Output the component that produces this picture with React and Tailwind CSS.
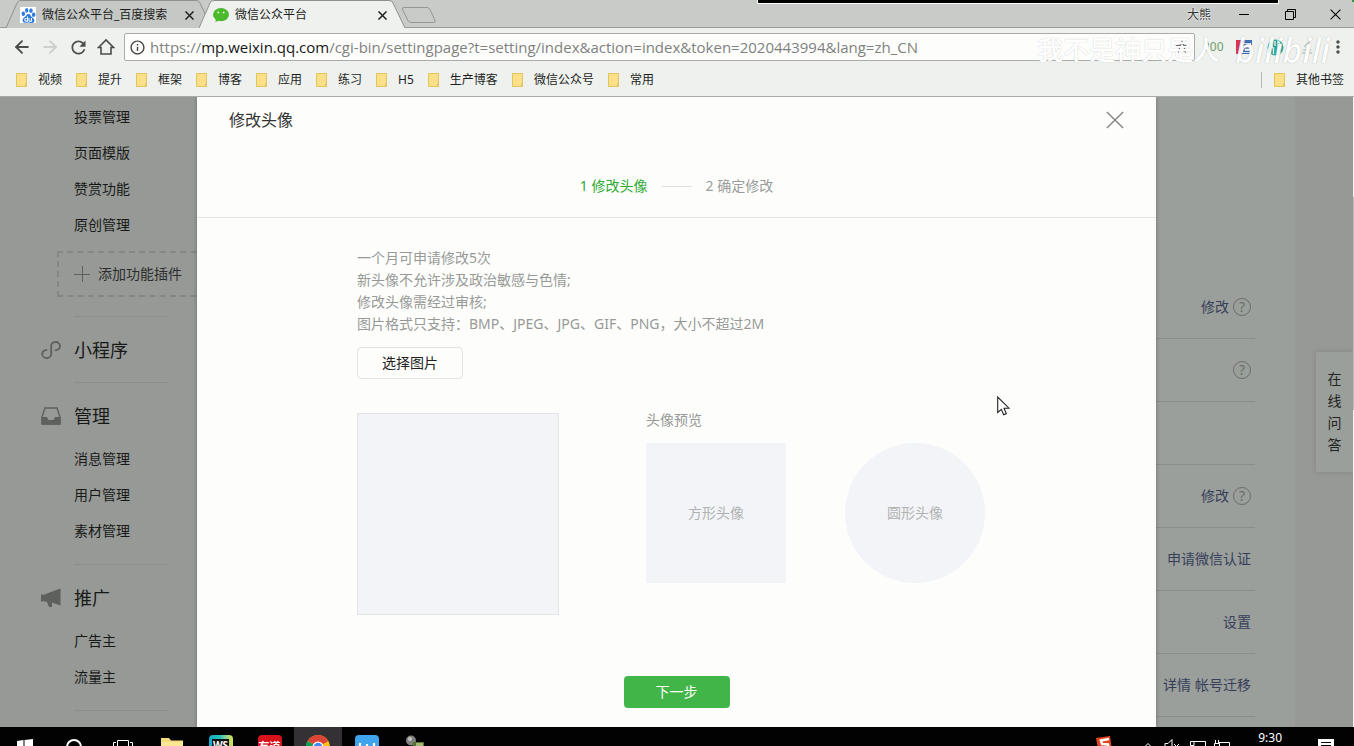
import React from "react";
import { MdRefresh, MdInfoOutline, MdStarBorder, MdMoreVert } from "react-icons/md";
import { SiBaidu } from "react-icons/si";
import { ArrowLeft, ArrowRight } from "lucide-react";

const bookmarks = ["视频", "提升", "框架", "博客", "应用", "练习", "H5", "生产博客", "微信公众号", "常用"];

function Folder() {
  return (
    <svg width="11" height="14" viewBox="0 0 11 14" aria-hidden="true">
      <path d="M.5.5h10v9.5l-1 .5v3h-9z" fill="#fbe08a" stroke="#e3c35c" />
      <path d="M9.5 13.5l1-3v3z" fill="#fff0b0" stroke="#e3c35c" />
    </svg>
  );
}

function CloseGlyph({ size, stroke, width }) {
  return (
    <svg width={size} height={size} viewBox="0 0 10 10" stroke={stroke} strokeWidth={width} aria-hidden="true">
      <path d="M.5.5l9 9M9.5.5l-9 9" />
    </svg>
  );
}

function Tab({ label, icon, active }) {
  return (
    <div className="relative flex h-7 w-[206px] shrink-0 items-center pt-0.5 pr-[18px] pl-3.5">
      <svg className="absolute inset-0 h-full w-full" viewBox="0 0 206 28" preserveAspectRatio="none" aria-hidden="true">
        <path d="M0 28L11 3Q12 .5 15 .5H190Q193 .5 194 3L206 28" fill={active ? "#eef1ee" : "#c5c8c5"} stroke="#8f918f" />
      </svg>
      <button type="button" className="relative flex min-w-0 flex-1 items-center gap-1.5 text-left text-xs text-[#1c1d1c]">
        {icon}
        <span className="truncate">{label}</span>
      </button>
      <button type="button" aria-label="关闭标签页" className="relative">
        <CloseGlyph size={9} stroke="#222" width={1.7} />
      </button>
    </div>
  );
}

function WeChatIcon() {
  return (
    <svg width="16" height="16" viewBox="0 0 16 16" aria-hidden="true">
      <ellipse cx="8" cy="7.6" rx="8" ry="6.6" fill="#4bb92c" />
      <path d="M3 12l-.6 3L6 13.500z" fill="#4bb92c" />
      <circle cx="5.300" cy="5.400" r="1" fill="#dff5d5" />
      <circle cx="10.600" cy="5.400" r="1" fill="#dff5d5" />
    </svg>
  );
}

function BrowserHeader() {
  return (
    <header className="relative shrink-0 border-b border-[#a9aba9] bg-[#eef1ee]">
      <div className="absolute top-0 right-[76px] z-10 h-[3px] w-[520px] bg-black outline-1 outline-white" />
      <div className="flex h-7 items-end bg-[#c9cbc9] shadow-[inset_0_-1px_0_#9a9c9a]">
        <div className="flex min-w-0 flex-1 pl-1.5">
          <Tab
            label="微信公众平台_百度搜索"
            icon={
              <span className="flex size-4 items-center justify-center bg-white text-[#2f7ddb]">
                <SiBaidu size={15} />
              </span>
            }
          />
          <div className="-ml-[13px]">
            <Tab active label="微信公众平台" icon={<WeChatIcon />} />
          </div>
          <button type="button" aria-label="新标签页" className="-ml-1 self-center pt-0.5">
            <svg width="36" height="18" viewBox="0 0 36 18" aria-hidden="true">
              <path d="M3 1.500H26Q28 1.500 29 3.500L34 14.500Q34.500 16.500 32.500 16.500H10Q8 16.500 7 14.500L1.500 3.500Q1 1.500 3 1.500Z" fill="#c9cbc9" stroke="#959795" />
            </svg>
          </button>
        </div>
        <div className="flex h-7 items-center">
          <button type="button" className="mr-2.5 pt-0.5 text-xs text-[#2e2f2e] [text-shadow:0_0_2px_#fff,0_0_2px_#fff]">大熊</button>
          <button type="button" aria-label="最小化" className="flex w-[46px] justify-center">
            <span className="h-px w-2.5 bg-black" />
          </button>
          <button type="button" aria-label="还原" className="flex w-[46px] justify-center">
            <svg width="11" height="11" viewBox="0 0 11 11" fill="none" stroke="#000" aria-hidden="true">
              <path d="M.5 2.500h8v8h-8zM2.500 2.500v-2h8v8h-2" />
            </svg>
          </button>
          <button type="button" aria-label="关闭" className="flex w-[41px] justify-center pl-1">
            <CloseGlyph size={11} stroke="#000" width={1} />
          </button>
        </div>
      </div>

      <div className="flex h-[38px] items-center">
        <nav className="flex w-[124px] shrink-0 items-center gap-2 pl-3 text-[#4c4e4c]">
          <button type="button" aria-label="后退"><ArrowLeft size={20} strokeWidth={2.300} /></button>
          <button type="button" aria-label="前进" className="text-[#cdd0cd]"><ArrowRight size={20} strokeWidth={2.300} /></button>
          <button type="button" aria-label="刷新"><MdRefresh size={21} /></button>
          <button type="button" aria-label="主页">
            <svg width="18" height="18" viewBox="0 0 18 18" fill="none" stroke="currentColor" strokeWidth="1.600" aria-hidden="true">
              <path d="M1.500 9.500L9 2l7.500 7.500H14V16H4V9.500z" />
            </svg>
          </button>
        </nav>
        <div className="flex h-7 min-w-0 flex-1 items-center gap-1 rounded-xs border border-[#a9aca9] bg-[#fdfefc] px-1">
          <MdInfoOutline size={17} className="shrink-0 text-[#454745]" />
          <div role="textbox" aria-label="地址" contentEditable suppressContentEditableWarning className="min-w-0 flex-1 truncate font-['Open_Sans',sans-serif] text-[15px] leading-6 text-[#7f817f] outline-none">
            https://<span className="text-[#161716]">mp.weixin.qq.com</span>/cgi-bin/settingpage?t=setting/index&amp;action=index&amp;token=2020443994&amp;lang=zh_CN
          </div>
          <button type="button" aria-label="收藏" className="text-[#555]"><MdStarBorder size={16} /></button>
        </div>
        <div className="flex w-[159px] shrink-0 items-center pl-2 text-xs">
          <span className="w-[33px] text-[#6fa06c]">200</span>
          <svg width="16" height="16" viewBox="0 0 16 16" aria-hidden="true">
            <path d="M0 1h6v14H0z" fill="#d5334e" />
            <path d="M6 1h10v14H6z" fill="#3f6fb4" />
            <path d="M5 4h10v10H5z" fill="#fff" />
            <path d="M7 5.500h7M7 9h6M7 12.500h7M8 5v8" stroke="#3f6fb4" strokeWidth="1.600" />
          </svg>
          <svg className="ml-[15px]" width="17" height="17" viewBox="0 0 17 17" aria-hidden="true">
            <circle cx="8.500" cy="8.500" r="8" fill="#2aa79b" />
            <path d="M5 2v5q0 2 1.500 2v6M8 2v5M11 15V2q3 2 2 7h-2" fill="none" stroke="#e8f5f2" strokeWidth="1.300" />
          </svg>
          <svg className="ml-[17px]" width="12" height="14" viewBox="0 0 12 14" fill="none" stroke="#c3c5c3" aria-hidden="true">
            <path d="M1 13h10M2 10h8M3 7l5-5v6" strokeWidth="1.500" />
          </svg>
          <button type="button" aria-label="菜单" className="ml-auto pr-1.5 text-[#4b4d4b]"><MdMoreVert size={20} /></button>
        </div>
      </div>

      <nav className="flex h-[30px] items-center gap-3.5 pr-2.5 pb-0.5 pl-4 text-xs text-[#1d1e1d]">
        {bookmarks.map((b) => (
          <a key={b} href="#" className="flex items-center gap-[11px] whitespace-nowrap"><Folder />{b}</a>
        ))}
        <div className="ml-auto flex items-center gap-3">
          <span className="h-4 w-px bg-[#b5b8b5]" />
          <a href="#" className="flex items-center gap-[11px] whitespace-nowrap"><Folder />其他书签</a>
        </div>
      </nav>

      <div className="pointer-events-none absolute top-[30px] right-6 flex items-center gap-4 whitespace-nowrap text-white">
        <span className="text-[26px] leading-10 font-medium [text-shadow:0_0_1px_#bbb]">我不是神只是人</span>
        <span className="text-[34px] leading-9 font-medium italic opacity-90 [text-shadow:0_0_1px_#999]">bilibili</span>
      </div>
      <div className="absolute top-0 right-0 size-0.5 bg-[#2e9a3c]" />
    </header>
  );
}

function MiniProgramIcon() {
  return (
    <svg width="20" height="20" viewBox="0 0 20 20" fill="none" stroke="#5d605d" strokeWidth="1.800" strokeLinecap="round" aria-hidden="true">
      <path d="M14.500 10.300C17.500 9.800 19 7.800 19 6A4.300 4.300 0 0 0 14.500 2C12 2 10.200 3.700 10.200 6v8c0 2.300-2 4-4.500 4A4.300 4.300 0 0 1 1.200 14c0-1.900 1.500-3.700 4.300-4.200" />
    </svg>
  );
}

function ManageIcon() {
  return (
    <svg width="20" height="18" viewBox="0 0 20 18" aria-hidden="true">
      <path d="M1 10L4 1h12L19 10v7H1z" fill="none" stroke="#5d605d" strokeWidth="1.400" />
      <path d="M.5 10h5.500l1.500 3h5l1.500-3h5.500v7.500H.5z" fill="#5d605d" />
    </svg>
  );
}

function PromoteIcon() {
  return (
    <svg width="20" height="20" viewBox="0 0 20 20" fill="#5d605d" aria-hidden="true">
      <path d="M0 6l2 1L18 1l1.500-.5v17L18 17l-7-2.500V19H8l-2-5-4-1-2 1z" />
    </svg>
  );
}

const sections = [
  { title: "小程序", icon: <MiniProgramIcon />, items: [] },
  { title: "管理", icon: <ManageIcon />, items: ["消息管理", "用户管理", "素材管理"] },
  { title: "推广", icon: <PromoteIcon />, items: ["广告主", "流量主"] },
];

function NavList({ items }) {
  return items.map((t) => (
    <li key={t}><a href="#" className="block leading-9">{t}</a></li>
  ));
}

function Sidebar() {
  return (
    <aside className="w-[220px] shrink-0 pt-0.5 pl-[74px] text-sm text-[#171917]">
      <ul><NavList items={["投票管理", "页面模版", "赞赏功能", "原创管理"]} /></ul>
      <button type="button" className="mt-2 -ml-[17px] flex h-[46px] w-[160px] items-center gap-2 border-2 border-dashed border-[#858785] pl-[15px] text-[#2c2e2c]">
        <svg width="16" height="16" viewBox="0 0 16 16" stroke="#5d605d" aria-hidden="true"><path d="M8.500 0v16M0 8.500h16" /></svg>
        添加功能插件
      </button>
      <div className="mt-[19px] w-[95px] border-t border-[#8b8d8b]" />
      {sections.map((s) => (
        <section key={s.title} className="w-[95px] border-b border-[#8b8d8b] pt-5 pb-[19px]">
          <h2 className="-ml-[33px] flex items-center gap-[13px] text-lg leading-[26px] whitespace-nowrap">
            {s.icon}
            {s.title}
          </h2>
          {s.items.length > 0 && <ul className="mt-3 -mb-1"><NavList items={s.items} /></ul>}
        </section>
      ))}
    </aside>
  );
}

function Help() {
  return (
    <button type="button" aria-label="帮助" className="flex size-[18px] items-center justify-center rounded-full border-[1.5px] border-[#6b6e6b] text-sm leading-none text-[#6b6e6b]">?</button>
  );
}

const rows = [
  { links: ["修改"], help: true },
  { links: [], help: true },
  { links: [] },
  { links: ["修改"], help: true },
  { links: ["申请微信认证"] },
  { links: ["设置"] },
  { links: ["详情", "帐号迁移"] },
];

function Settings() {
  return (
    <main className="mr-[59px] min-w-0 flex-1 bg-[#9b9f9b] pt-[179px] pr-10 pl-10">
      {rows.map((r, i) => (
        <div key={i} className="flex h-[63px] items-center justify-end gap-1 border-b border-[#8a8e8a] pr-1 text-sm text-[#363e5a]">
          {r.links.map((l) => <a key={l} href="#">{l}</a>)}
          {r.help && <Help />}
        </div>
      ))}
    </main>
  );
}

function AvatarDialog() {
  return (
    <div role="dialog" aria-modal="true" aria-label="修改头像" className="flex h-full w-[959px] flex-col bg-[#fdfefc] shadow-[0_0_4px_rgba(0,0,0,0.3)]">
      <div className="border-b border-[#e1e4e1] pb-5">
        <div className="flex h-[46px] items-center justify-between px-8">
          <h1 className="text-base text-[#333]">修改头像</h1>
          <button type="button" aria-label="关闭"><CloseGlyph size={18} stroke="#858785" width={0.8} /></button>
        </div>
        <ol className="mt-8 flex items-center justify-center gap-3.5 text-sm leading-[22px] text-[#9a9c9a]">
          <li className="text-[#2cab32]">1 修改头像</li>
          <li aria-hidden="true" className="w-[30px] border-t border-[#dcdfdc]" />
          <li>2 确定修改</li>
        </ol>
      </div>
      <div className="pt-[29px] pl-40 text-sm text-[#979997]">
        <p className="leading-[22px]">
          一个月可申请修改5次<br />
          新头像不允许涉及政治敏感与色情;<br />
          修改头像需经过审核;<br />
          图片格式只支持：BMP、JPEG、JPG、GIF、PNG，大小不超过2M
        </p>
        <button type="button" className="mt-3 h-8 w-[106px] rounded-sm border border-[#e2e5e2] text-[#222]">选择图片</button>
        <div className="mt-[34px] flex items-start">
          <div className="h-[202px] w-[202px] border border-[#e2e4e6] bg-[#f3f4f7]" />
          <div className="ml-[87px] -mt-1">
            <h2 className="leading-[22px]">头像预览</h2>
            <div className="mt-3 flex gap-[59px] text-[#b0b2b2]">
              <div className="flex size-[140px] items-center justify-center bg-[#f3f4f7]">方形头像</div>
              <div className="flex size-[140px] items-center justify-center rounded-full bg-[#f3f4f7]">圆形头像</div>
            </div>
          </div>
        </div>
      </div>
      <div className="mt-[61px] flex justify-center">
        <button type="button" className="h-8 w-[106px] rounded-sm bg-[#42b549] text-sm text-white">下一步</button>
      </div>
    </div>
  );
}

const cell = "flex h-10 w-[49px] shrink-0 items-center justify-center";

function Taskbar() {
  return (
    <footer className="flex h-[19px] shrink-0 items-start overflow-hidden bg-[#030203] text-white">
      <button type="button" aria-label="开始" className={cell}>
        <svg width="16" height="16" viewBox="0 0 16 16" fill="#fff"><path d="M0 2l6.500-1v6.500H0zM7.500 1L16 0v7.500H7.500zM0 8.500h6.500V15L0 14zM7.500 8.500H16V16l-8.500-1z" /></svg>
      </button>
      <button type="button" aria-label="搜索" className={cell}>
        <svg width="16" height="16" viewBox="0 0 16 16" fill="none" stroke="#fff" strokeWidth="2"><circle cx="8" cy="8" r="7" /></svg>
      </button>
      <button type="button" aria-label="任务视图" className={cell}>
        <svg width="20" height="16" viewBox="0 0 20 16" fill="none" stroke="#fff"><path d="M4.500 1.500h11v13h-11zM3 3.500H.5v9H3M17 3.500h2.500v9H17" /></svg>
      </button>
      <button type="button" aria-label="文件资源管理器" className={cell}>
        <svg width="22" height="20" viewBox="0 0 22 20"><path d="M0 1h8l2 2.500h12V20H0z" fill="#f7dc7d" /><path d="M0 5h22v15H0z" fill="#fbe694" /></svg>
      </button>
      <button type="button" aria-label="WebStorm" className={cell}>
        <span className="relative flex size-6 items-start justify-center rounded-sm bg-linear-to-r from-[#1aa7c9] via-[#26c6b4] to-[#d9e04a] pt-1">
          <span className="bg-[#111] px-px text-[10px] leading-3 font-bold">WS</span>
        </span>
      </button>
      <button type="button" aria-label="有道" className={cell}>
        <span className="flex size-6 items-center justify-center rounded-sm bg-[#d8121b] text-[11px] font-bold">有道</span>
      </button>
      <button type="button" aria-label="Chrome" className="flex h-10 w-12 shrink-0 items-center justify-center bg-[#333133]">
        <svg width="24" height="24" viewBox="0 0 24 24">
          <circle cx="12" cy="12" r="12" fill="#fbc116" />
          <path d="M12 12L1.600 6A12 12 0 0 1 22.400 6z" fill="#db4437" />
          <path d="M1.600 6L12 12v12A12 12 0 0 1 1.600 6z" fill="#0f9d58" />
          <circle cx="12" cy="12" r="5.500" fill="#fff" />
          <circle cx="12" cy="12" r="4.300" fill="#4285f4" />
        </svg>
      </button>
      <button type="button" aria-label="WPS" className={cell}>
        <svg width="24" height="24" viewBox="0 0 24 24"><rect width="24" height="24" rx="4" fill="#3fa3ee" /><path d="M5 8v9h7V9v8h7V8" fill="none" stroke="#fff" strokeWidth="2.200" /></svg>
      </button>
      <button type="button" aria-label="录像" className={cell}>
        <svg width="22" height="24" viewBox="0 0 22 24"><circle cx="6" cy="5.500" r="5" fill="#7d807d" /><circle cx="5" cy="4" r="2" fill="#c3c5c3" /><path d="M8 7h11v12H8z" fill="#55702f" /><path d="M11 8h7v4h-7z" fill="#a5b678" /></svg>
      </button>
      <div className="ml-auto flex items-start">
        <svg className="mt-[9px] mr-[31px]" width="18" height="18" viewBox="0 0 18 18"><path d="M1 2l14-2 2 14-13 4z" fill="#e0441f" /><path d="M14 3L6 4.500 7 8l6 .5.500 4.500L6 14" fill="none" stroke="#fff" strokeWidth="2.500" /></svg>
        <svg className="mt-4 mr-3" width="8" height="6" viewBox="0 0 8 6" fill="none" stroke="#fff"><path d="M0 4.500L4 .5l4 4" /></svg>
        <svg className="mt-3 mr-2.5" width="16" height="14" viewBox="0 0 16 14" fill="none" stroke="#fff"><path d="M1 4.500h3l4-4v12l-4-4H1zM10 5l5 5M15 5l-5 5" /></svg>
        <svg className="mt-3.5 mr-2" width="16" height="12" viewBox="0 0 16 12" fill="none" stroke="#fff"><path d="M4 .5h11.500v10H4M.5 .5h3.500v4H.5zM2.500 5v6" /></svg>
        <svg className="mt-[13px] mr-7" width="16" height="12" viewBox="0 0 16 12" fill="none" stroke="#fff"><path d="M5 2.500h10.500v8H5M1.500 0v3M4.500 0v3M.5 3.500h5v3h-5zM3 7v4" /></svg>
        <time className="mt-0.5 mr-9 text-xs leading-[18px]">9:30</time>
        <svg className="mt-3 mr-5" width="16" height="16" viewBox="0 0 16 16"><path d="M0 0h16v13h-5l-3 3v-3H0z" fill="#fff" /><path d="M3 3.500h10M3 6.500h10" stroke="#000" /></svg>
      </div>
    </footer>
  );
}

export default function App() {
  return (
    <div className="flex h-screen flex-col overflow-hidden bg-[#979997] font-['Noto_Sans','Noto_Sans_CJK_SC',sans-serif]">
      <BrowserHeader />
      <div className="relative min-h-0 flex-1 overflow-hidden">
        <div className="flex h-full overflow-hidden">
          <Sidebar />
          <Settings />
        </div>
        <div className="absolute top-[255px] right-px flex w-[37px] justify-center bg-[#9b9f9b] py-4 text-sm leading-[22px] text-[#232523] shadow-[0_0_5px_rgba(0,0,0,0.15)]">
          <a href="#" className="w-3.5 break-all">在线问答</a>
        </div>
        <div className="absolute inset-y-0 right-0 w-px bg-[#f4f5f4]">
          <div className="mt-[100px] h-[213px] bg-[#b9bbb9]" />
        </div>
        <div className="absolute inset-y-0 right-px left-0 flex justify-center">
          <AvatarDialog />
        </div>
        <svg className="pointer-events-none absolute top-[299px] left-[997px]" width="13" height="20" viewBox="0 0 13 20" aria-hidden="true">
          <path d="M.7 1v15.500l3.600-3.200 2.400 5.400 2.600-1.100L7 12.200h5z" fill="#fff" stroke="#222" strokeWidth="1.100" />
        </svg>
      </div>
      <Taskbar />
    </div>
  );
}
